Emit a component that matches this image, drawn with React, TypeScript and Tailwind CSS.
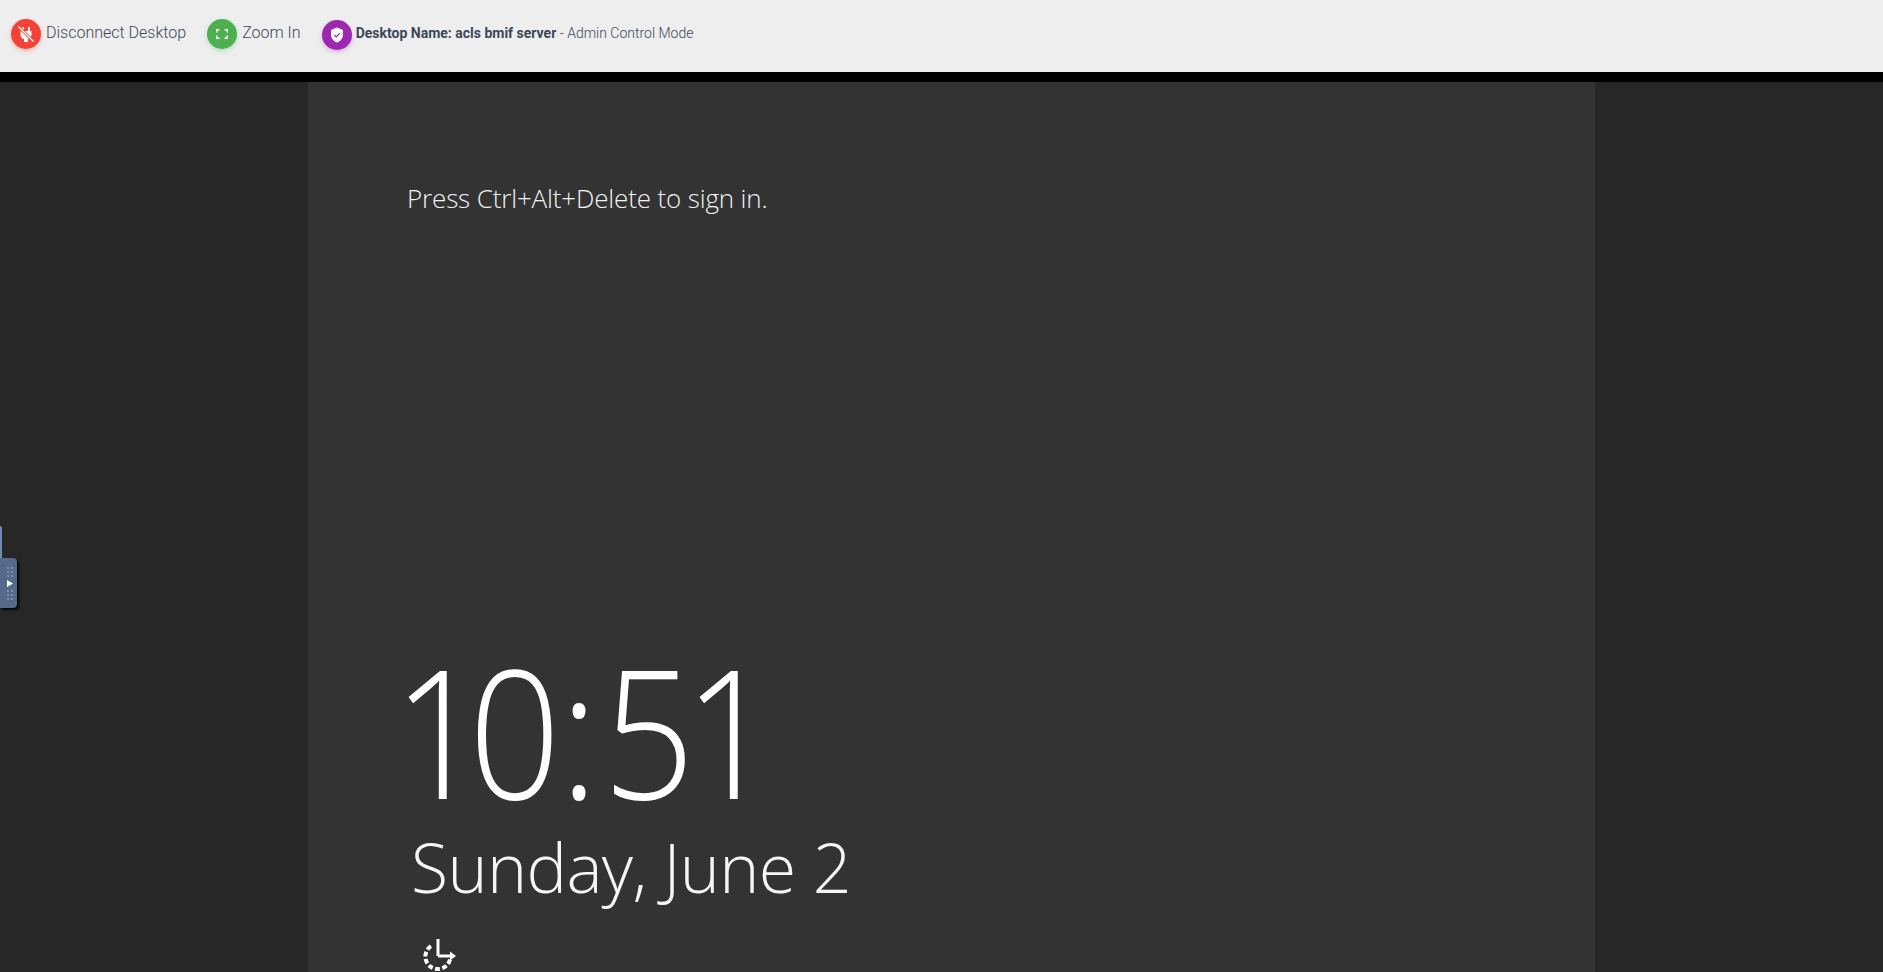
export default function App() {
  return (
    <div className="relative flex h-[972px] w-full flex-col overflow-hidden bg-black">
      <header className="flex h-[72px] shrink-0 items-start bg-[#eeeeee] pl-[11px] pt-[19px] font-['Roboto',sans-serif] text-[#3c4858]">
        <div className="flex items-center">
          <span className="flex h-[30px] w-[30px] items-center justify-center rounded-full bg-[#f44336] shadow-[0_2px_4px_rgba(244,67,54,0.3)]">
            <svg width="18" height="18" viewBox="0 0 18 18" fill="none">
              <path d="M6 2v4M12 2v4" stroke="#fff" strokeWidth="1.800" />
              <path d="M3.500 6h11v4c0 2.200-1.800 3.800-3.500 4.100V17H7v-2.900C5.300 13.800 3.500 12.200 3.500 10z" fill="#fff" />
              <path d="M2 2l14 14" stroke="#f44336" strokeWidth="3" />
              <path d="M1.500 1.500l15 15" stroke="#fff" strokeWidth="1.300" />
            </svg>
          </span>
          <span className="relative top-[-1px] ml-[5px] text-[16px] leading-[20px] font-light">Disconnect Desktop</span>
        </div>
        <div className="ml-[21px] flex items-center">
          <span className="flex h-[30px] w-[30px] items-center justify-center rounded-full bg-[#4caf50] shadow-[0_2px_4px_rgba(76,175,80,0.3)]">
            <svg width="12" height="10" viewBox="0 0 12 10" fill="none" stroke="#fff" strokeWidth="1.500">
              <path d="M.75 3.500V.75h2.750M8.500.75h2.750v2.750M11.250 6.500v2.750H8.500M3.500 9.250H.75V6.500" />
            </svg>
          </span>
          <span className="relative top-[-1px] ml-[5px] text-[16px] leading-[20px] font-light">Zoom In</span>
        </div>
        <div className="ml-[21px] mt-[1px] flex items-center">
          <span className="flex h-[30px] w-[30px] items-center justify-center rounded-full bg-[#9c27b0] shadow-[0_2px_4px_rgba(156,39,176,0.3)]">
            <svg width="14" height="16" viewBox="0 0 14 16">
              <path d="M7 .5l6 2.500v4.500c0 3.800-2.600 6.800-6 8-3.400-1.200-6-4.200-6-8V3z" fill="#fff" />
              <path d="M4.300 8l2 2 3.500-3.800" fill="none" stroke="#9c27b0" strokeWidth="1.200" />
            </svg>
          </span>
          <span className="relative top-[-2px] ml-[4px] text-[14px] leading-[18px] font-light whitespace-nowrap">
            <b className="font-bold">Desktop Name: acls bmif server</b> - Admin Control Mode
          </span>
        </div>
      </header>
      <div className="h-[10px] shrink-0 bg-black" />
      <main className="flex min-h-0 flex-1 bg-[#272727]">
        <div className="w-[308px] shrink-0" />
        <section className="w-[1287px] shrink-0 bg-[#333333] pl-[99px] font-['Open_Sans',sans-serif] text-white">
          <p className="mt-[98px] text-[26px] leading-[36px] font-light tracking-[-0.15px] text-[#f2f2f2]">Press Ctrl+Alt+Delete to sign in.</p>
          <p className="mt-[390px] ml-[-14px] origin-left scale-x-[0.9] text-[179px] leading-[248px] font-light">
            <span className="tracking-[-18px]">1</span>
            <span className="tracking-[-1px]">0</span>
            <span className="tracking-[5px]">:</span>
            <span className="tracking-[-12px]">5</span>
            <span>1</span>
          </p>
          <p className="mt-[-32px] ml-[4px] text-[68px] leading-[90px] font-light tracking-[-0.6px] text-[#f6f6f6]">Sunday, June 2</p>
          <svg className="mt-[26px] ml-[16px]" width="36" height="34" viewBox="0 0 36 34" fill="none" stroke="#fff" strokeWidth="4">
            <path d="M27 21.500A12.500 12.500 0 1 1 9 7.500" strokeDasharray="4.800 2.400" />
            <path d="M15 1v17M15 18h15" strokeWidth="3" />
            <path d="M27 13.500l6 4.500-6 4.500z" fill="#fff" stroke="none" />
          </svg>
        </section>
        <div className="flex-1" />
      </main>
      <div className="absolute left-0 top-[526px] h-[60px] w-[2px] rounded-r-[2px] bg-[#6d8bb0]" />
      <div className="absolute left-0 top-[558px] flex h-[50px] w-[17px] flex-col items-center justify-center gap-[3px] rounded-r-[4px] bg-[#56698a] pl-[3px] shadow-[2px_2px_2px_rgba(0,0,0,0.8)]">
        <span className="grid grid-cols-2 gap-[2px]">
          {Array.from({ length: 6 }, (_, i) => <i key={i} className="h-[2px] w-[2px] bg-[#7f90ab]" />)}
        </span>
        <svg width="6" height="7" viewBox="0 0 6 7"><path d="M0 0l6 3.500L0 7z" fill="#fff" /></svg>
        <span className="grid grid-cols-2 gap-[2px]">
          {Array.from({ length: 6 }, (_, i) => <i key={i} className="h-[2px] w-[2px] bg-[#7f90ab]" />)}
        </span>
      </div>
    </div>
  );
}
